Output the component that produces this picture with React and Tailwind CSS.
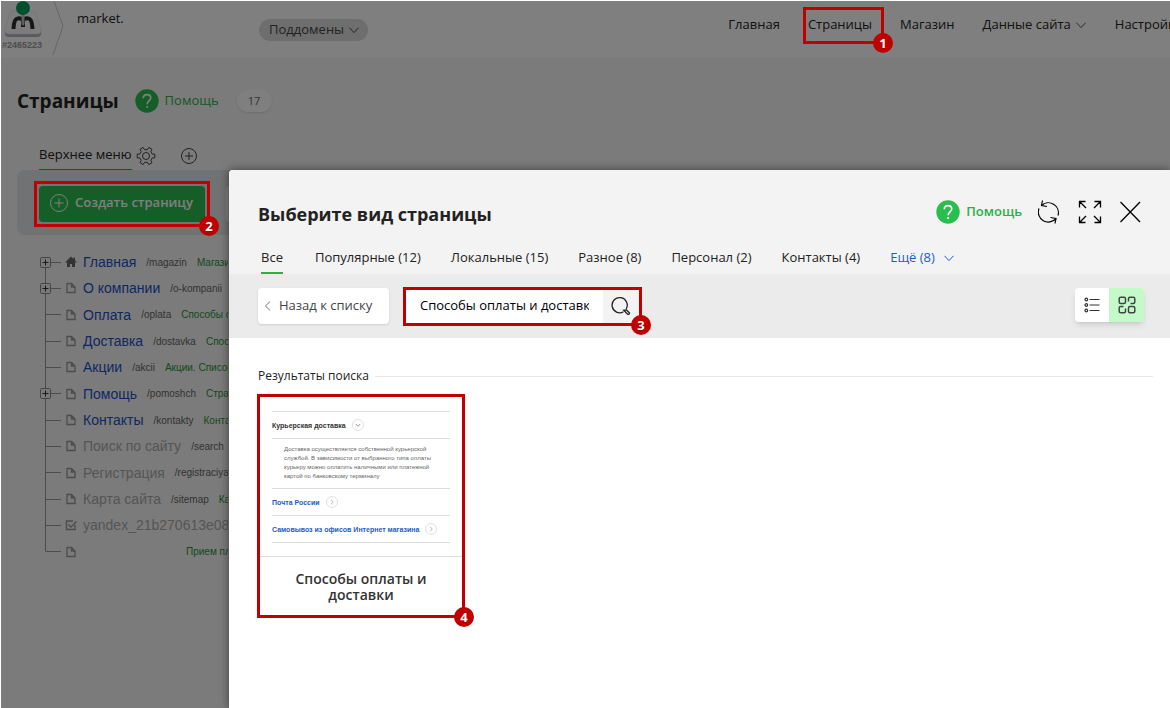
function Badge({ children }) {
  return (
    <span className="absolute -right-3 -bottom-3 flex size-5 items-center justify-center rounded-full bg-[#c00000] text-[13px] leading-5 font-bold text-white text-shadow-sm">
      {children}
    </span>
  );
}

function Frame({ step }) {
  return (
    <span className="pointer-events-none absolute inset-0 z-30 border-3 border-[#c00000]">
      <Badge>{step}</Badge>
    </span>
  );
}

function Chevron({ className }) {
  return (
    <svg viewBox="0 0 12 12" className={className} fill="none" stroke="currentColor">
      <path d="M1.5 3.8 6 8.6l4.5-4.8" />
    </svg>
  );
}

function HelpLink({ className }) {
  return (
    <a href="#help" className={`flex items-center gap-1.5 text-[13px] leading-5 text-[#28b148] ${className}`}>
      <svg viewBox="0 0 24 24" className="size-6" fill="none">
        <circle cx="12" cy="12" r="11.7" fill="#2abd4f" />
        <path d="M8.3 9.3c0-2.3 1.6-3.7 3.7-3.7s3.7 1.4 3.7 3.4c0 2.8-3.6 3-3.6 6.2" stroke="#fff" strokeWidth="1.6" />
        <circle cx="12.1" cy="18" r="1" fill="#fff" />
      </svg>
      <span className="pb-0.5">Помощь</span>
    </a>
  );
}

function Logo() {
  return (
    <svg viewBox="0 0 38 38" className="h-[38px] w-[38px]">
      <path d="M7 12h24l6 18q1 6-4 6H5q-5 0-4-6z" fill="#b4b7bf" />
      <path d="M8 10h22q1.5 0 2 2l5 16q1 5-4 5H5q-5 0-4-5l5-16q.5-2 2-2z" fill="#fafafa" stroke="#ddd" strokeWidth=".5" />
      <g fill="none" strokeWidth="4" stroke="#2c2c2c">
        <path d="M9.5 28c.3-7 1.500-10.400 4.200-10.600 3-.3 5.300.6 5.300 3V26" />
        <path d="M28.500 28c-.3-7-1.500-10.400-4.200-10.600-3-.3-5.300.6-5.300 3" />
      </g>
      <path d="M19 13v10" stroke="#bdbdbd" strokeWidth="3" strokeLinecap="round" />
      <circle cx="19" cy="7" r="7" fill="#00a05c" />
    </svg>
  );
}

function PageIcon({ kind }) {
  if (kind === 'home') {
    return (
      <svg viewBox="0 0 12 12" className="size-3 text-[#666]" fill="currentColor">
        <path d="M6 .5 0 6.5h2V11h3V8h2v3h3V6.5h2l-2-2v-3H8.5V3z" />
      </svg>
    );
  }
  return (
    <svg viewBox="0 0 12 12" className="size-3 text-[#999]" fill="none" stroke="currentColor">
      {kind === 'check' ? (
        <path d="M10 6v4.5H1.5V2H8M3.5 5.5 6 8l5.5-5.5" strokeWidth="1.4" />
      ) : (
        <path d="M2 1.5h4.5L10 5v5.5H2zM6.5 1.5V5H10" strokeWidth="1.3" />
      )}
    </svg>
  );
}

const nav = [
  { title: 'Главная' },
  { title: 'Страницы', step: 1 },
  { title: 'Магазин' },
  { title: 'Данные сайта', more: true },
  { title: 'Настройки' },
];

const pages = [
  { title: 'Главная', path: '/magazin', note: 'Магазин', icon: 'home', open: true },
  { title: 'О компании', path: '/o-kompanii', note: '', open: true },
  { title: 'Оплата', path: '/oplata', note: 'Способы оплаты' },
  { title: 'Доставка', path: '/dostavka', note: 'Способы' },
  { title: 'Акции', path: '/akcii', note: 'Акции. Список' },
  { title: 'Помощь', path: '/pomoshch', note: 'Страница', open: true },
  { title: 'Контакты', path: '/kontakty', note: 'Контакты' },
  { title: 'Поиск по сайту', path: '/search', note: '', off: true },
  { title: 'Регистрация', path: '/registraciya', note: '', off: true },
  { title: 'Карта сайта', path: '/sitemap', note: 'Карта', off: true },
  { title: 'yandex_21b270613e08', path: '', note: '', icon: 'check', off: true },
  { title: '', path: '', note: 'Прием платежей' },
];

const tabs = ['Все', 'Популярные (12)', 'Локальные (15)', 'Разное (8)', 'Персонал (2)', 'Контакты (4)'];

function Header() {
  return (
    <header className="flex h-[57px] items-start justify-between bg-white">
      <div className="flex">
        <div className="w-[50px] text-[#999]">
          <div className="pl-[3px]">
            <Logo />
          </div>
          <p className="pl-px font-['Liberation_Sans',sans-serif] text-[9px] leading-3 font-bold">#2465223</p>
        </div>
        <svg viewBox="0 0 14 56" className="h-14 w-3.5" fill="none" stroke="#ccc">
          <path d="M3 0l9 25L2 54" />
        </svg>
        <p className="w-[194px] pt-[7px] pl-3 text-[13px] leading-5">market.</p>
        <button className="mt-[18px] flex h-[22px] items-center gap-1 rounded-full bg-[#dcdcdc] pr-2 pl-2.5 text-[13px] text-[#444]">
          Поддомены
          <Chevron className="size-3" />
        </button>
      </div>
      <nav className="-mr-9 flex">
        {nav.map((item) => (
          <a key={item.title} href="#nav" className="relative mt-1.5 mr-[11px] flex h-[37px] items-center gap-1 pr-3 pb-0.5 pl-[5px] text-[13px] whitespace-nowrap">
            {item.title}
            {item.more && <Chevron className="size-3 text-[#555]" />}
            {item.step && <Frame step={item.step} />}
          </a>
        ))}
      </nav>
    </header>
  );
}

function PageTree() {
  return (
    <ul className="mt-[14px] grid h-[316px] w-[211px] grid-rows-12 overflow-hidden pl-[22px] font-['Liberation_Sans',sans-serif] whitespace-nowrap">
      {pages.map((page, i) => (
        <li key={i} className="flex items-center">
          <svg viewBox="0 0 24 27" className="-my-px h-[27px] w-6 shrink-0" fill="none" stroke="#999">
            <path d={i === 0 ? 'M6.5 13v14' : i === pages.length - 1 ? 'M6.5 0v13' : 'M6.5 0v27'} />
            <path d="M6.5 13.5H22" />
            {page.open && (
              <>
                <rect x="1.5" y="8.5" width="10" height="10" rx="1" fill="#f3f3f3" stroke="#888" />
                <path d="M3.5 13.5h6M6.5 10.5v6" stroke="#333" />
              </>
            )}
          </svg>
          <span className="mr-1.5 ml-0.5">
            <PageIcon kind={page.icon} />
          </span>
          {page.title ? (
            <a href="#page" className={page.off ? 'text-sm text-[#aaa]' : 'text-sm text-[#1d4fc4]'}>
              {page.title}
            </a>
          ) : (
            <span className="w-[83px] shrink-0" />
          )}
          <span className="ml-2.5 text-[10px] text-[#666]">{page.path}</span>
          <span className="ml-2.5 text-[10px] text-[#2c8f3c]">{page.note}</span>
        </li>
      ))}
    </ul>
  );
}

function Preview() {
  return (
    <div className="border-b border-[#ddd] px-3 pt-[14px] pb-[13px] font-['Liberation_Sans',sans-serif] text-[7px] leading-[9px]">
      <div className="flex h-7 items-center gap-1.5 border-y border-[#ddd] font-bold text-[#333]">
        Курьерская доставка
        <span className="flex size-3 items-center justify-center rounded-full border border-[#e2e2e2]">
          <Chevron className="size-1.5" />
        </span>
      </div>
      <p className="pt-1.5 pr-3 pb-[7px] pl-3 text-[6px] text-[#666]">
        Доставка осуществляется собственной курьерской службой. В зависимости от выбранного типа оплаты курьеру можно
        оплатить наличными или платежной картой по банковскому терминалу
      </p>
      {['Почта России', 'Самовывоз из офисов Интернет магазина'].map((title) => (
        <div key={title} className="flex h-[27px] items-center gap-1.5 border-t border-[#ddd] font-bold whitespace-nowrap text-[#1d5bcc] last:h-7 last:border-b">
          {title}
          <span className="flex size-3 items-center justify-center rounded-full border border-[#e2e2e2] text-[#777]">
            <Chevron className="size-1.5 -rotate-90" />
          </span>
        </div>
      ))}
    </div>
  );
}

function PagePicker() {
  return (
    <section className="absolute top-[169px] right-0 bottom-0 left-[228px] z-20 flex flex-col rounded-tl-[4px] bg-white text-[13px] text-[#222] shadow-[0_0_10px_rgba(0,0,0,0.5)]">
      <div className="rounded-tl-[4px] bg-[#f3f3f3] pr-7 pl-[29px]">
        <div className="flex h-[78px] items-center justify-between">
          <h2 className="pt-2.5 text-lg font-bold">Выберите вид страницы</h2>
          <div className="flex items-center gap-4 pt-1.5 text-black">
            <HelpLink className="font-semibold" />
            <button aria-label="Обновить">
              <svg viewBox="0 0 24 24" className="size-6" fill="none" stroke="currentColor" strokeWidth="1.2">
                <path d="M3.5 5.5A10 10 0 0 1 20 15.5M18 18.5A10 10 0 0 1 1 8.500" />
                <path d="M4.500.5l-1 5 5.500 1M17 23.500l1-5-5.500-1" />
              </svg>
            </button>
            <button aria-label="Во весь экран">
              <svg viewBox="0 0 24 24" className="size-6" fill="none" stroke="currentColor" strokeWidth="1.3">
                <path d="M1.5 7.5v-6h6M1.5 1.5 8 8M16.5 1.5h6v6M22.5 1.5 16 8M1.5 16.5v6h6M1.5 22.5 8 16M22.5 16.5v6h-6M22.5 22.5 16 16" />
              </svg>
            </button>
            <button aria-label="Закрыть">
              <svg viewBox="0 0 24 24" className="size-6" fill="none" stroke="currentColor" strokeWidth="1.3">
                <path d="m2.5 2 19.5 20M22 2 2.5 22" />
              </svg>
            </button>
          </div>
        </div>
        <nav className="flex gap-[26px] whitespace-nowrap">
          {tabs.map((tab, i) => (
            <a key={tab} href="#tab" className={i === 0 ? 'mr-1 ml-[3px] h-[26px] border-b-2 border-[#28b148]' : 'px-0.5'}>
              {tab}
            </a>
          ))}
          <a href="#tab" className="flex h-5 items-center gap-2 px-0.5 text-[#1d5bcc]">
            Ещё (8)
            <Chevron className="size-3" />
          </a>
        </nav>
      </div>
      <div className="flex h-16 items-center bg-[#ebebeb] pr-[26px] pl-[29px]">
        <button className="flex h-9 w-[131px] items-center gap-[5px] rounded bg-white px-1 text-[#444] shadow">
          <Chevron className="size-3 rotate-90 text-[#777]" />
          Назад к списку
        </button>
        <form className="relative ml-3.5 flex h-[39px] w-[239px] p-[3px]">
          <input aria-label="Поиск" defaultValue="Способы оплаты и доставки" className="w-0 flex-1 bg-white px-3.5 text-black" />
          <button aria-label="Найти" className="flex w-9 items-center justify-center bg-[#f3f3f3]">
            <svg viewBox="0 0 20 20" className="size-5" fill="none" stroke="#222" strokeWidth="1.3">
              <path d="M12.5 15.7A7.6 7.6 0 1 1 15.2 13" />
              <path d="m12.8 14.2 4 4.2q1.5.3 1.7-1.4l-3-3z" />
            </svg>
          </button>
          <Frame step={3} />
        </form>
        <div className="mb-0.5 ml-auto flex overflow-hidden rounded bg-white shadow-md">
          <button aria-label="Список" className="flex h-[34px] w-[34px] items-center justify-center">
            <svg viewBox="0 0 16 16" className="size-4" fill="none" stroke="#333" strokeWidth="1.2">
              <path d="M5.5 2.5h10M5.5 8h10M5.5 13.5h10" />
              <circle cx="2.3" cy="2.5" r="1.3" />
              <circle cx="2.3" cy="8" r="1.3" />
              <circle cx="2.3" cy="13.5" r="1.3" />
            </svg>
          </button>
          <button aria-label="Плитка" className="flex h-[34px] w-[35px] items-center justify-center bg-[#c3fac8]">
            <svg viewBox="0 0 18 18" className="size-[18px]" fill="none" stroke="#444" strokeWidth="1.5">
              <rect x="1.2" y="1.2" width="6.3" height="6.3" rx="1.5" />
              <path d="M10.5 5.5V2.700q0-1.500 1.500-1.500h3.300q1.500 0 1.500 1.500V6q0 1.500-1.500 1.500H12.500" />
              <path d="M5.500 10.500H2.700q-1.500 0-1.500 1.500v3.300q0 1.500 1.500 1.500H6q1.500 0 1.500-1.500V12.500" />
              <rect x="10.5" y="10.5" width="6.3" height="6.3" rx="1.5" />
            </svg>
          </button>
        </div>
      </div>
      <div className="pr-[17px] pl-7">
        <div className="flex items-center gap-1.5 pt-7 pl-px text-xs leading-5">
          Результаты поиска
          <hr className="flex-1 border-[#e8e8e8]" />
        </div>
        <a href="#template" className="relative mt-2 block w-52 p-[3px]">
          <Preview />
          <h3 className="px-6 pt-[14px] pb-3 text-center text-sm leading-4 font-semibold text-[#333]">Способы оплаты и доставки</h3>
          <Frame step={4} />
        </a>
      </div>
    </section>
  );
}

export default function App() {
  return (
    <div className="min-h-screen overflow-hidden bg-white pt-px pl-px font-['Open_Sans',sans-serif] text-[#222]">
      <div className="relative min-h-[calc(100vh-1px)] bg-[#f7f7f7]">
        <Header />
        <main className="px-4">
          <div className="flex h-[86px] items-center">
            <h1 className="mr-4 text-[19px] font-bold">Страницы</h1>
            <HelpLink className="font-medium" />
            <span className="ml-[18px] flex h-[22px] w-[35px] items-center justify-center rounded-full bg-white text-[11px] text-[#666] shadow">17</span>
          </div>
          <div className="flex h-[26px] items-start pl-[22px] text-[13px]">
            <a href="#top" className="h-[26px] border-b border-[#28b148] pt-px">Верхнее меню</a>
            <button aria-label="Настройки меню" className="mt-0.5 ml-1">
              <svg viewBox="0 0 20 20" className="size-5" fill="none" stroke="#444" strokeLinejoin="round">
                <circle cx="10" cy="10" r="3.5" />
                <path d="M16.2 8.1h2.6v3.8h-2.6l-1.4 2.5 1.2 2.3-3.2 1.9-1.300-2.300h-3l-1.300 2.300L4 16.700l1.200-2.300-1.400-2.500H1.200V8.100h2.600l1.400-2.500L4 3.300l3.200-1.900 1.300 2.300h3l1.300-2.300L16 3.300l-1.200 2.300z" />
              </svg>
            </button>
            <button aria-label="Добавить меню" className="mt-0.5 ml-[23px]">
              <svg viewBox="0 0 20 20" className="size-5" fill="none" stroke="#444">
                <circle cx="10" cy="10" r="7.5" />
                <path d="M6 10h8M10 6v8" />
              </svg>
            </button>
          </div>
          <div className="flex h-[65px] items-center gap-4 rounded-lg bg-[#e3e4e8] px-[17px] pt-0.5">
            <div className="relative h-[46px] w-44 shrink-0 p-[5px]">
              <button className="flex h-full w-full items-center gap-1.5 rounded bg-[#2abd4f] px-2.5 pb-0.5 text-[13px] font-semibold whitespace-nowrap text-white">
                <svg viewBox="0 0 20 20" className="size-5" fill="none" stroke="currentColor">
                  <circle cx="10" cy="10" r="8.5" />
                  <path d="M5.5 10h9M10 5.5v9" />
                </svg>
                Создать страницу
              </button>
              <Frame step={2} />
            </div>
            <span className="h-9 w-32 rounded bg-white" />
          </div>
          <PageTree />
        </main>
        <div className="absolute inset-0 z-10 bg-black/50" />
        <PagePicker />
      </div>
    </div>
  );
}
